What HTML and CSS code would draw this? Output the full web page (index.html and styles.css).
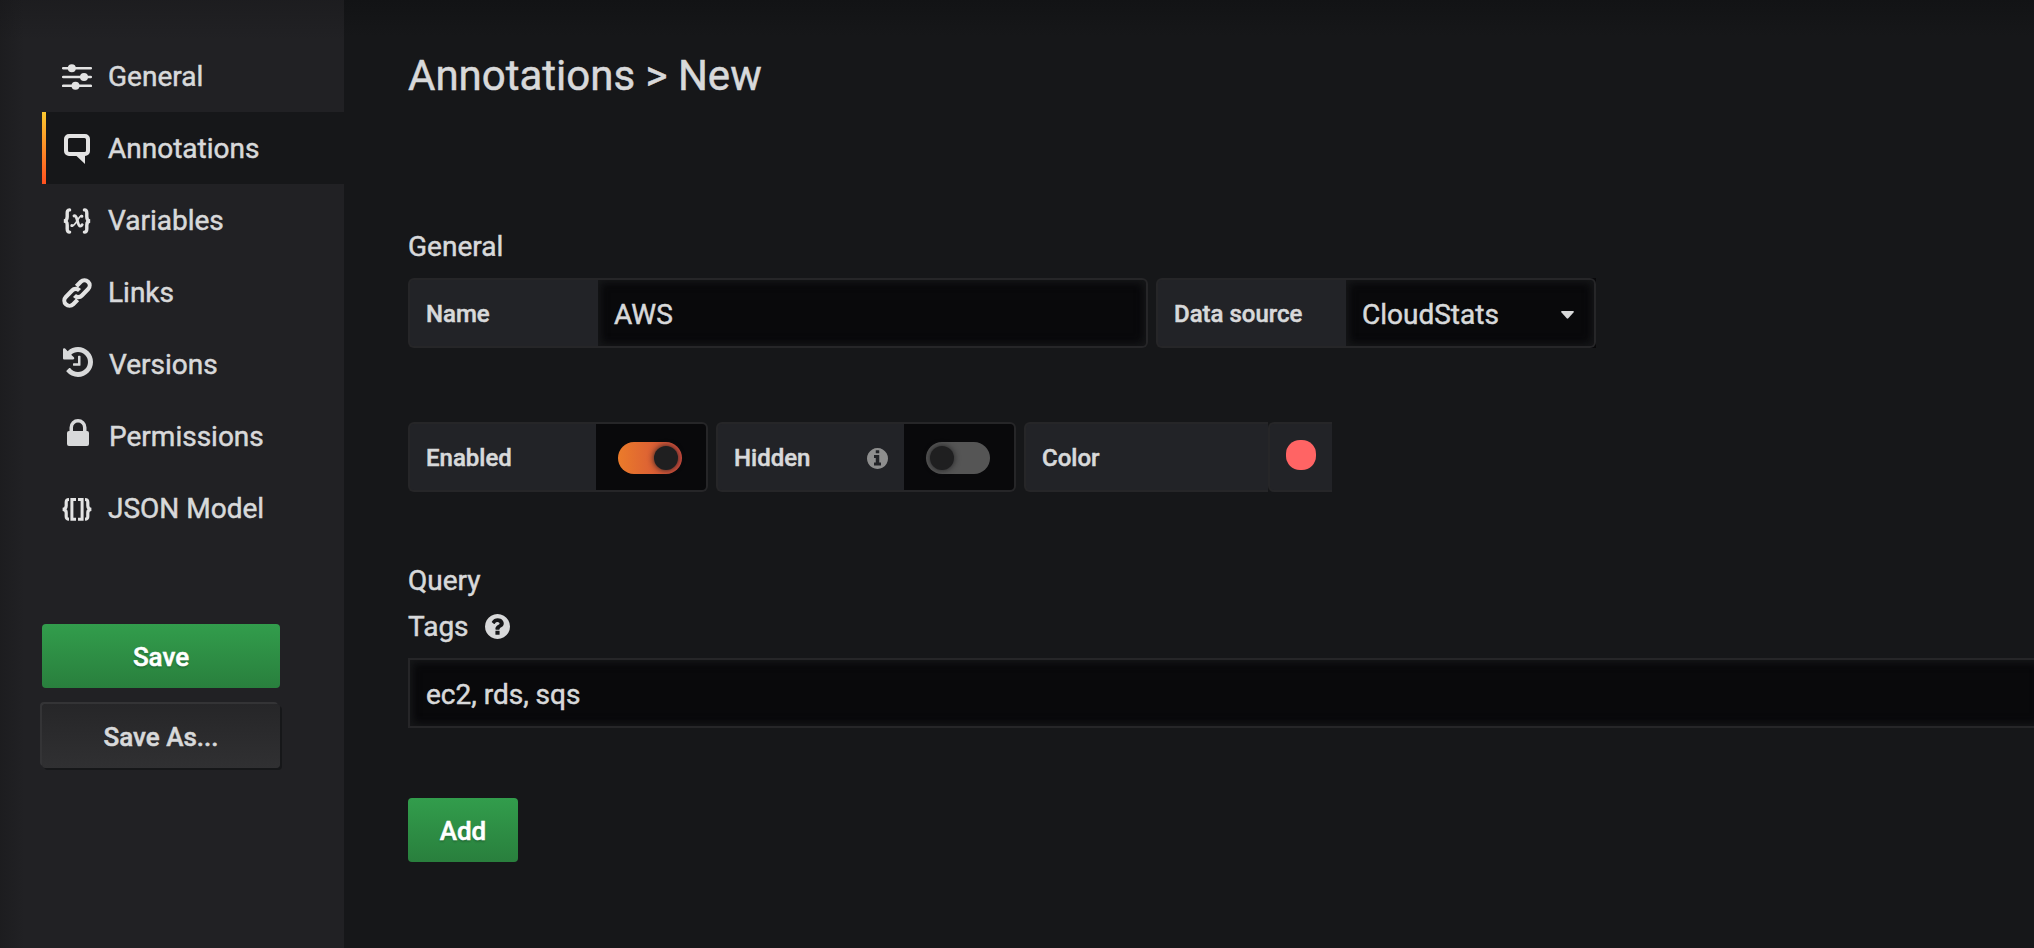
FILE: index.html
```html
<!DOCTYPE html>
<html lang="en">
<head>
<meta charset="utf-8">
<title>Annotations</title>
<link rel="stylesheet" href="styles.css">
</head>
<body>
<div class="settings">
  <aside class="sidebar">
    <nav class="nav">
      <a class="nav-item">
        <svg class="nav-icon" viewBox="0 0 30 30"><g stroke="currentColor" stroke-width="2.6" stroke-linecap="round"><path d="M1.2 6.2H28.8M1.2 15H28.8M1.2 23.8H28.8"/></g><g fill="currentColor"><circle cx="9.8" cy="6.2" r="4"/><circle cx="22" cy="15" r="4"/><circle cx="13.5" cy="23.8" r="4"/></g></svg>
        <span>General</span>
      </a>
      <a class="nav-item active">
        <svg class="nav-icon" viewBox="0 0 30 30"><path fill="currentColor" fill-rule="evenodd" d="M7 0H23a5 5 0 0 1 5 5V17a5 5 0 0 1-5 5V30L14.500 22H7a5 5 0 0 1-5-5V5a5 5 0 0 1 5-5ZM7.500 4a1.500 1.500 0 0 0-1.500 1.500V16.500a1.500 1.500 0 0 0 1.500 1.500H22.500a1.500 1.500 0 0 0 1.500-1.500V5.500a1.500 1.500 0 0 0-1.500-1.500Z"/></svg>
        <span>Annotations</span>
      </a>
      <a class="nav-item">
        <svg class="nav-icon" viewBox="0 0 30 30"><g fill="none" stroke="currentColor" stroke-linecap="round"><path stroke-width="3.400" d="M7.600 3.900C5.500 3.900 5.200 5.200 5.200 7.200v3.600C5.200 13.600 4.200 15 1.800 15c2.400 0 3.400 1.400 3.400 4.200v3.600c0 2 .3 3.300 2.400 3.300M22.400 3.900c2.100 0 2.400 1.300 2.400 3.300v3.600c0 2.800 1 4.200 3.400 4.200-2.400 0-3.400 1.400-3.400 4.200v3.600c0 2-.3 3.300-2.400 3.300"/><path stroke-width="2.900" d="M12 9.900c3.600-1.200 3.200 10 6.200 10.200 1 0 1.500-.4 2-1.400"/><path stroke-width="1.700" d="M20 9.700c-2.800-1.200-6.400 11-10.300 10.200"/><path stroke-width="3" d="M19.800 10.300h.1M9.800 19.500h.1"/></g></svg>
        <span>Variables</span>
      </a>
      <a class="nav-item">
        <svg class="nav-icon" viewBox="0 0 30 30"><g fill="none" stroke="currentColor" stroke-width="4.100"><path d="M14.400 8.300l4.400-4.500a5 5 0 0 1 7.400 7.200l-6.300 6.500a5 5 0 0 1-7.400 0"/><path d="M15.600 21.700l-4.400 4.500a5 5 0 0 1-7.400-7.200l6.300-6.500a5 5 0 0 1 7.400 0"/></g></svg>
        <span>Links</span>
      </a>
      <a class="nav-item fa">
        <svg class="nav-icon raised" viewBox="0 0 1536 1536"><path fill="currentColor" d="M1536 768q0 156-61 298t-164 245-245 164-298 61q-172 0-327-72.500T177 1259q-7-10-6.500-22.500t8.500-20.500l137-138q10-9 25-9 16 2 23 12 73 95 179 147t225 52q104 0 198.500-40.500T1130 1130t109.500-163.500T1280 768t-40.500-198.500T1130 406 966.500 296.500 768 256q-98 0-188 35.500T420 393l137 138q31 30 14 69-17 40-59 40H64q-26 0-45-19T0 576V128q0-42 40-59 39-17 69 14l130 129Q346 111 483.500 55.500T768 0q156 0 298 61t245 164 164 245 61 298zM896 480v448q0 14-9 23t-23 9H544q-14 0-23-9t-9-23v-64q0-14 9-23t23-9h224V480q0-14 9-23t23-9h64q14 0 23 9t9 23z"/></svg>
        <span>Versions</span>
      </a>
      <a class="nav-item fa">
        <svg class="nav-icon lock" viewBox="0 0 22 27"><path fill="currentColor" fill-rule="evenodd" d="M2.500 12V8.500a8.500 8.500 0 0 1 17 0V12H20a2 2 0 0 1 2 2V25a2 2 0 0 1-2 2H2a2 2 0 0 1-2-2V14a2 2 0 0 1 2-2ZM6 12H16V8.500a5 5 0 0 0-10 0Z"/></svg>
        <span>Permissions</span>
      </a>
      <a class="nav-item">
        <svg class="nav-icon" viewBox="0 0 30 30"><g fill="none" stroke="currentColor"><path stroke-width="3.200" d="M7 5.500C4.600 5.500 4.200 6.300 4.200 8.300V11.800c0 2.200-.8 3.500-3.600 3.500 2.800 0 3.600 1.300 3.600 3.500v3.500c0 2 .4 2.800 2.800 2.800M23 5.500c2.400 0 2.800.8 2.800 2.800V11.800c0 2.200.8 3.500 3.600 3.500-2.800 0-3.600 1.300-3.600 3.500v3.500c0 2-.4 2.800-2.800 2.800"/><path stroke-width="3" d="M14 5.400H9.900V25.200H14M16 5.400H20.100V25.200H16"/></g></svg>
        <span>JSON Model</span>
      </a>
    </nav>
    <div class="side-actions">
      <button class="btn btn-success">Save</button>
      <button class="btn btn-inverse">Save As...</button>
    </div>
  </aside>
  <main class="content">
    <h1 class="title">Annotations &gt; New</h1>
    <h2 class="section">General</h2>
    <div class="row">
      <div class="field">
        <label class="label label-name">Name</label>
        <div class="input input-name">AWS</div>
      </div>
      <div class="field">
        <label class="label label-name">Data source</label>
        <div class="select-wrap">
          <div class="input input-select"><span>CloudStats</span><svg class="caret" viewBox="0 0 13 8"><path fill="currentColor" d="M1 0H12q1.500.3.500 1.500L7.300 7.300q-.8.800-1.600 0L.5 1.500Q-.500.3 1 0Z"/></svg></div>
        </div>
      </div>
    </div>
    <div class="row row-switches">
      <div class="field">
        <label class="label label-switch">Enabled</label>
        <div class="switch"><span class="track on"><span class="knob"></span></span></div>
      </div>
      <div class="field">
        <label class="label label-switch">Hidden
          <svg class="info" viewBox="0 0 1536 1536"><path fill="currentColor" d="M1024 1248v-160q0-14-9-23t-23-9h-96V544q0-14-9-23t-23-9H544q-14 0-23 9t-9 23v160q0 14 9 23t23 9h96v320h-96q-14 0-23 9t-9 23v160q0 14 9 23t23 9h448q14 0 23-9t9-23zM896 352V192q0-14-9-23t-23-9H672q-14 0-23 9t-9 23v160q0 14 9 23t23 9h192q14 0 23-9t9-23zm640 416q0 209-103 385.500T1153.500 1433 768 1536t-385.500-103T103 1153.500 0 768t103-385.500T382.500 103 768 0t385.500 103T1433 382.500 1536 768z"/></svg>
        </label>
        <div class="switch"><span class="track"><span class="knob"></span></span></div>
      </div>
      <div class="field">
        <label class="label label-color">Color</label>
        <div class="swatch-box"><span class="swatch"></span></div>
      </div>
    </div>
    <h2 class="section section-query">Query</h2>
    <div class="tags"><span class="tags-label">Tags</span>
      <svg class="help" viewBox="0 0 1536 1536"><path fill="currentColor" d="M896 1248v-192q0-14-9-23t-23-9H672q-14 0-23 9t-9 23v192q0 14 9 23t23 9h192q14 0 23-9t9-23zm256-672q0-88-55.500-163T958 297t-170-41q-243 0-371 213-15 24 8 42l132 100q7 6 19 6 16 0 25-12 53-68 86-92 34-24 86-24 48 0 85.500 26t37.500 59q0 38-20 61t-68 45q-63 28-115.500 86.500T640 892v36q0 14 9 23t23 9h192q14 0 23-9t9-23q0-19 21.500-49.500T972 829q32-18 49-28.500t46-35 44.500-48 28-60.500 12.500-81zm384 192q0 209-103 385.500T1153.500 1433 768 1536t-385.500-103T103 1153.500 0 768t103-385.500T382.500 103 768 0t385.500 103T1433 382.500 1536 768z"/></svg>
    </div>
    <div class="input input-tags">ec2, rds, sqs</div>
    <button class="btn btn-success btn-add">Add</button>
  </main>
</div>
</body>
</html>
```
FILE: styles.css
```css
* {
  box-sizing: border-box;
}

body {
  margin: 0;
  background: #161719;
  color: #d8d9da;
  font-family: Roboto, "Liberation Sans", sans-serif;
  font-size: 28px;
  line-height: 42px;
  -webkit-text-stroke: 0.5px;
  overflow: hidden;
}

.settings {
  display: flex;
  height: 948px;
}

.sidebar {
  flex: none;
  width: 344px;
  padding: 40px 0 0 42px;
  background:
    linear-gradient(90deg, rgba(22, 22, 24, 0.4), rgba(22, 22, 24, 0) 24px),
    linear-gradient(rgba(22, 22, 24, 0.4), rgba(22, 22, 24, 0) 40px),
    #212124;
}

.nav-item {
  display: flex;
  align-items: center;
  gap: 16px;
  height: 72px;
  padding: 2px 0 0 20px;
}

.nav-item.active {
  padding-left: 16px;
  background: #161719;
  border-left: 4px solid;
  border-image: linear-gradient(#fbca2f, #ff4f1f) 1;
}

.nav-icon {
  flex: none;
  width: 30px;
  height: 30px;
  color: #e3e3e3;
}

.nav-item.fa {
  padding-left: 21px;
}

.nav-icon.raised {
  color: #d8d9da;
  margin-top: -7px;
}

.nav-icon.lock {
  width: 22px;
  height: 27px;
  margin: -9px 4px 0;
  color: #d8d9da;
}

.side-actions {
  display: flex;
  flex-direction: column;
  gap: 16px;
  width: 238px;
  margin-top: 80px;
}

.btn {
  height: 64px;
  padding: 2px 0 0;
  border: 0;
  border-radius: 4px;
  font: 500 26px/62px Roboto, "Liberation Sans", sans-serif;
  text-align: center;
  -webkit-text-stroke: 0.5px;
}

.btn-success {
  color: #fff;
  background: linear-gradient(#329d4c, #297f3d);
  text-shadow: 0 2px 2px rgba(0, 0, 0, 0.2);
}

.btn-inverse {
  color: #d8d9da;
  background: linear-gradient(#262628, #303032);
  box-shadow: -2px -2px 0 0 #343436, 2px 2px 0 0 #161719;
}

.content {
  flex: 1;
  min-width: 0;
  padding: 49px 0 0 64px;
  background: linear-gradient(#121315, rgba(18, 19, 21, 0) 36px);
}

.title {
  margin: 0;
  font-size: 42px;
  font-weight: 400;
  line-height: 54px;
}

.section {
  margin: 123px 0 10px;
  font-size: 28px;
  font-weight: 400;
  line-height: 42px;
}

.row {
  display: flex;
  gap: 8px;
}

.row-switches {
  margin-top: 74px;
}

.field {
  display: flex;
}

.label {
  display: flex;
  align-items: center;
  justify-content: space-between;
  height: 70px;
  padding: 2px 16px 0;
  border: 2px solid #262628;
  border-right: 0;
  border-radius: 6px 0 0 6px;
  background: #222327;
  font-size: 24px;
  font-weight: 500;
}

.label-name {
  width: 190px;
}

.label-switch {
  width: 188px;
}

.label-color {
  width: 244px;
}

.input {
  display: flex;
  align-items: center;
  height: 70px;
  padding: 3px 16px 0;
  border: 2px solid #262628;
  background: #09090b;
  box-shadow: inset 2px 2px 10px #161719, inset -2px -2px 10px #161719;
}

.input-name {
  width: 550px;
  border-left-width: 0;
  border-radius: 0 6px 6px 0;
}

.select-wrap {
  background: #09090b;
}

.input-select {
  justify-content: space-between;
  width: 250px;
  padding-right: 20px;
  border-left-width: 0;
  border-radius: 0 6px 6px 0;
}

.caret {
  width: 13px;
  height: 8px;
}

.switch {
  display: flex;
  align-items: center;
  width: 112px;
  height: 70px;
  padding: 2px 0 0 22px;
  border: 2px solid #262628;
  border-left: 0;
  border-radius: 0 6px 6px 0;
  background: #09090b;
}

.track {
  display: flex;
  align-items: center;
  width: 64px;
  height: 32px;
  padding: 0 4px;
  border-radius: 16px;
  background: #555;
}

.track.on {
  justify-content: flex-end;
  background: linear-gradient(90deg, #eb7b2a, #cf4a3d);
}

.knob {
  width: 24px;
  height: 24px;
  border-radius: 50%;
  background: #1f1f20;
  box-shadow: 0 0 6px #1f1f20;
}

.info {
  width: 21px;
  height: 21px;
  color: #8e8e8e;
}

.swatch-box {
  width: 64px;
  height: 70px;
  padding: 16px;
  border: 2px solid #262628;
  border-right: 0;
  border-radius: 6px 0 0 6px;
  background: #222327;
}

.swatch {
  display: block;
  width: 30px;
  height: 30px;
  border-radius: 14px;
  background: #ff6464;
}

.section-query {
  margin: 68px 0 0;
}

.tags {
  display: flex;
  align-items: center;
  gap: 16px;
  margin-top: 3px;
  height: 42px;
}

.tags-label {
  padding-top: 2px;
}

.help {
  width: 25px;
  height: 25px;
}

.input-tags {
  margin: 11px -10px 0 0;
}

.btn-add {
  display: block;
  width: 110px;
  margin-top: 70px;
}
```
